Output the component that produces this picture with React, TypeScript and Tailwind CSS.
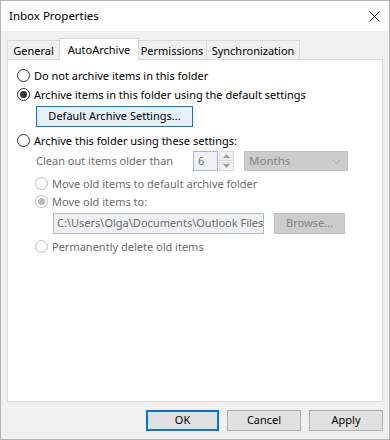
import React from 'react';

const font = "font-['Segoe_UI','Noto_Sans','Open_Sans',sans-serif]";

interface RadioProps {
  label: string;
  checked?: boolean;
  disabled?: boolean;
}

const Radio: React.FC<RadioProps> = ({ label, checked, disabled }) => {
  return (
    <div className="flex items-center h-[18px]">
      <span
        className={`w-[13px] h-[13px] shrink-0 rounded-full border bg-white flex items-center justify-center ${
          disabled ? 'border-[#bcbcbc]' : 'border-[#333333]'
        }`}
      >
        {checked && (
          <span className={`w-[7px] h-[7px] rounded-full ${disabled ? 'bg-[#bcbcbc]' : 'bg-[#333333]'}`} />
        )}
      </span>
      <span className={`ml-[4px] leading-none ${disabled ? 'text-[#6d6d6d]' : 'text-black'}`}>{label}</span>
    </div>
  );
};

const tabs = [
  { name: 'General', w: 'w-[53px]' },
  { name: 'AutoArchive', w: 'w-[80px]', active: true },
  { name: 'Permissions', w: 'w-[70px]' },
  { name: 'Synchronization', w: 'w-[94px]' },
];

export default function App() {
  return (
    <div className={`${font} text-[11px] w-[390px] h-[440px] border border-[#b4b4b4] bg-[#f0f0f0] flex flex-col`}>
      {/* title bar */}
      <div className="h-[30px] bg-white flex items-center justify-between pl-[8px] pr-[9px]">
        <span className="text-black text-[11.5px]">Inbox Properties</span>
        <svg width="11" height="11" viewBox="0 0 11 11" className="mt-[1px]">
          <path d="M0.5 0.5 L10.5 10.5 M10.5 0.5 L0.5 10.5" stroke="#000" strokeWidth="1" />
        </svg>
      </div>

      <div className="px-[6px] pt-[7px]">
        {/* tabs */}
        <div className="flex items-end h-[21px]">
          {tabs.map((t) =>
            t.active ? (
              <div
                key={t.name}
                className={`${t.w} h-[22px] -mb-[1px] relative z-10 bg-white border border-b-0 border-[#d9d9d9] flex items-start justify-center pt-[3px] -mx-[1px]`}
              >
                {t.name}
              </div>
            ) : (
              <div
                key={t.name}
                className={`${t.w} h-[19px] border border-b-0 border-[#d9d9d9] bg-[#f0f0f0] flex items-center justify-center pt-[2px] -ml-[1px] first:ml-0`}
              >
                {t.name}
              </div>
            )
          )}
        </div>

        {/* panel */}
        <div className="h-[343px] bg-white border border-[#d9d9d9] pt-[6px] pl-[9px] flex flex-col">
          <Radio label="Do not archive items in this folder" />
          <div className="mt-[1px]">
            <Radio label="Archive items in this folder using the default settings" checked />
          </div>
          <div className="mt-[3px] ml-[19px]">
            <button className="w-[157px] h-[21px] bg-[#e5f1fb] border border-[#0078d7] flex items-center justify-center text-black">
              Default Archive Settings...
            </button>
          </div>
          <div className="mt-[4px]">
            <Radio label="Archive this folder using these settings:" />
          </div>

          <div className="mt-[2px] ml-[19px] flex items-center h-[20px]">
            <span className="w-[157px] text-[#6d6d6d]">Clean out items older than</span>
            <div className="w-[25px] h-[20px] border border-[#a9b9d3] bg-[#f0f0f0] flex items-center pl-[4px] text-[#6d6d6d]">
              6
            </div>
            <div className="ml-[1px] w-[15px] h-[20px] flex flex-col gap-[1px]">
              <div className="flex-1 bg-[#f0f0f0] border border-[#dcdcdc] flex items-center justify-center">
                <svg width="7" height="4" viewBox="0 0 7 4">
                  <path d="M0 4 L3.5 0 L7 4 Z" fill="#a0a0a0" />
                </svg>
              </div>
              <div className="flex-1 bg-[#f0f0f0] border border-[#dcdcdc] flex items-center justify-center">
                <svg width="7" height="4" viewBox="0 0 7 4">
                  <path d="M0 0 L3.5 4 L7 0 Z" fill="#a0a0a0" />
                </svg>
              </div>
            </div>
            <div className="ml-[10px] w-[104px] h-[20px] bg-[#cccccc] border border-[#bfbfbf] flex items-center justify-between pl-[4px] pr-[6px] text-[#838383] text-[11.5px]">
              <span>Months</span>
              <svg width="9" height="5" viewBox="0 0 9 5">
                <path d="M0.5 0.5 L4.5 4.5 L8.5 0.5" stroke="#a8a8a8" fill="none" strokeWidth="1" />
              </svg>
            </div>
          </div>

          <div className="ml-[18px] flex flex-col">
            <div className="mt-[3px]">
              <Radio label="Move old items to default archive folder" disabled />
            </div>
            <Radio label="Move old items to:" checked disabled />
            <div className="mt-[3px] ml-[18px] flex items-center">
              <div className="w-[211px] h-[21px] border border-[#a9b9d3] bg-[#f0f0f0] flex items-center pl-[3px] text-[#6d6d6d] overflow-hidden whitespace-nowrap">
                C:\Users\Olga\Documents\Outlook Files
              </div>
              <button className="ml-[10px] w-[71px] h-[21px] bg-[#cccccc] border border-[#bfbfbf] flex items-center justify-center text-[#838383]">
                Browse...
              </button>
            </div>
            <div className="mt-[3px]">
              <Radio label="Permanently delete old items" disabled />
            </div>
          </div>
        </div>

        {/* footer */}
        <div className="mt-[8px] flex justify-end gap-[8px]">
          <button className="w-[73px] h-[21px] bg-[#e1e1e1] border-2 border-[#0078d7] flex items-center justify-center text-black">
            OK
          </button>
          <button className="w-[74px] h-[21px] bg-[#e1e1e1] border border-[#adadad] flex items-center justify-center text-black">
            Cancel
          </button>
          <button className="w-[74px] h-[21px] bg-[#e1e1e1] border border-[#adadad] flex items-center justify-center text-black">
            Apply
          </button>
        </div>
      </div>
    </div>
  );
}
